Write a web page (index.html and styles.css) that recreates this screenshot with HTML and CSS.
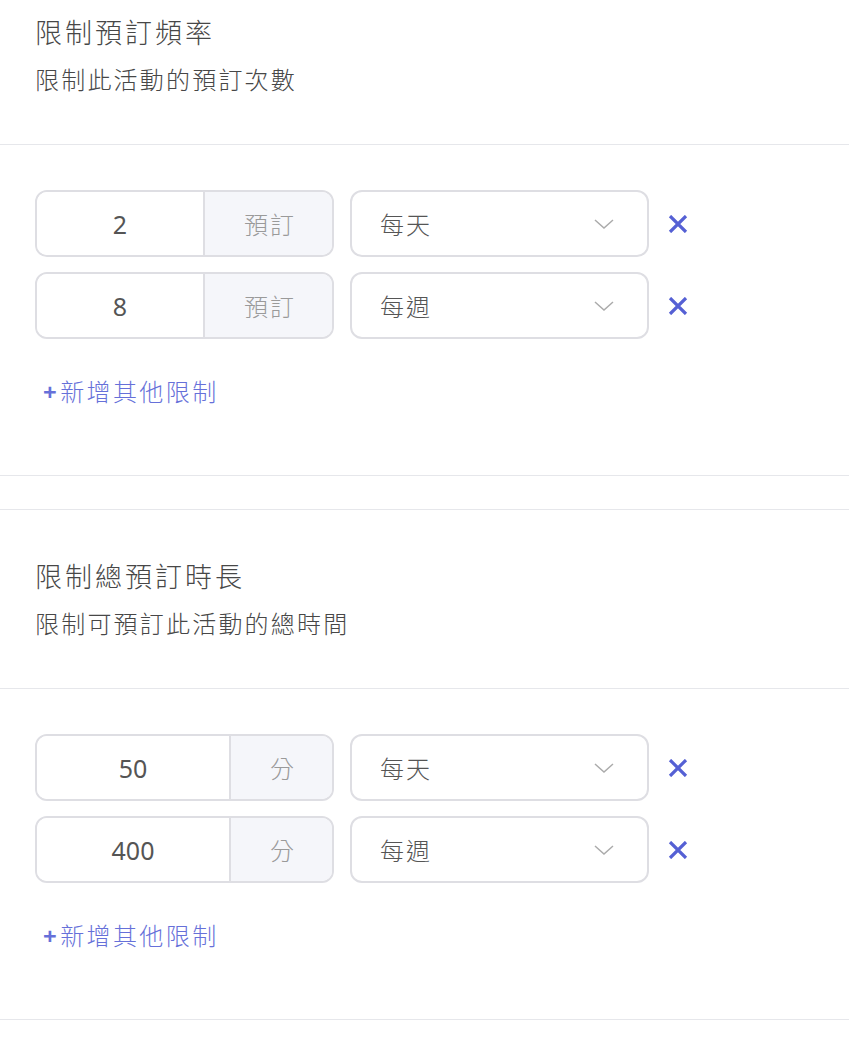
FILE: index.html
```html
<!DOCTYPE html>
<html lang="zh-Hant">
<head>
  <meta charset="UTF-8" />
  <title>預訂限制</title>
  <link rel="stylesheet" href="styles.css">
</head>
<body>
  <div class="page">
    <section class="limit">
      <div class="limit-head">
        <h3>限制預訂頻率</h3>
        <p>限制此活動的預訂次數</p>
      </div>
      <div class="limit-body">
        <div class="rule">
          <div class="qty"><input type="text" value="2"><span class="unit">預訂</span></div>
          <div class="period"><span>每天</span><svg viewBox="0 0 20 10" width="20" height="10"><path d="M1 1l9 8 9-8" /></svg></div>
          <button class="remove"><svg viewBox="0 0 20 18" width="20" height="18"><path d="M2 1l16 16M18 1L2 17" /></svg></button>
        </div>
        <div class="rule">
          <div class="qty"><input type="text" value="8"><span class="unit">預訂</span></div>
          <div class="period"><span>每週</span><svg viewBox="0 0 20 10" width="20" height="10"><path d="M1 1l9 8 9-8" /></svg></div>
          <button class="remove"><svg viewBox="0 0 20 18" width="20" height="18"><path d="M2 1l16 16M18 1L2 17" /></svg></button>
        </div>
        <a class="add" href="#"><b>+</b>新增其他限制</a>
      </div>
    </section>

    <section class="limit">
      <div class="limit-head">
        <h3>限制總預訂時長</h3>
        <p>限制可預訂此活動的總時間</p>
      </div>
      <div class="limit-body">
        <div class="rule">
          <div class="qty"><input type="text" value="50"><span class="unit">分</span></div>
          <div class="period"><span>每天</span><svg viewBox="0 0 20 10" width="20" height="10"><path d="M1 1l9 8 9-8" /></svg></div>
          <button class="remove"><svg viewBox="0 0 20 18" width="20" height="18"><path d="M2 1l16 16M18 1L2 17" /></svg></button>
        </div>
        <div class="rule">
          <div class="qty"><input type="text" value="400"><span class="unit">分</span></div>
          <div class="period"><span>每週</span><svg viewBox="0 0 20 10" width="20" height="10"><path d="M1 1l9 8 9-8" /></svg></div>
          <button class="remove"><svg viewBox="0 0 20 18" width="20" height="18"><path d="M2 1l16 16M18 1L2 17" /></svg></button>
        </div>
        <a class="add" href="#"><b>+</b>新增其他限制</a>
      </div>
    </section>
  </div>
</body>
</html>
```

FILE: styles.css
```css
body {
  margin: 0;
  background: #fff;
  color: #454545;
  font-family: "Noto Sans", "Noto Sans CJK TC", sans-serif;
  font-weight: 300;
  overflow: hidden;
}
.page { margin-top: -35px; }

.limit {
  border-top: 1px solid #e6e7eb;
  border-bottom: 1px solid #e6e7eb;
  margin-bottom: 33px;
}
.limit-head {
  padding: 49px 35px 46px;
  border-bottom: 1px solid #e6e7eb;
}
.limit-head h3 {
  margin: 0;
  font-size: 27px;
  font-weight: 300;
  line-height: 36px;
  letter-spacing: 3px;
  color: #474747;
}
.limit-head p {
  margin: 11px 0 0;
  font-size: 24px;
  line-height: 36px;
  letter-spacing: 2.2px;
  color: #474747;
}

.limit-body {
  padding: 45px 35px 65px;
  display: flex;
  flex-direction: column;
  align-items: flex-start;
}
.rule {
  display: flex;
  align-items: center;
  gap: 16px;
  margin-bottom: 15px;
}
.qty {
  display: flex;
  width: 299px;
  height: 67px;
  box-sizing: border-box;
  border: 2px solid #dedee3;
  border-radius: 12px;
  overflow: hidden;
}
.qty input {
  flex: 1;
  min-width: 0;
  border: none;
  outline: none;
  text-align: center;
  font-family: "Noto Sans", sans-serif;
  font-weight: 400;
  font-size: 25px;
  color: #555;
  background: #fff;
}
.unit {
  display: flex;
  align-items: center;
  padding: 0 36px 0 39px;
  background: #f5f6fa;
  border-left: 2px solid #dedee3;
  font-size: 24px;
  letter-spacing: 2px;
  color: #9a9a9a;
}
.period {
  display: flex;
  align-items: center;
  justify-content: space-between;
  width: 299px;
  height: 67px;
  box-sizing: border-box;
  padding: 0 33px 0 28px;
  border: 2px solid #dedee3;
  border-radius: 12px;
  font-size: 24px;
  letter-spacing: 2px;
  color: #555;
}
.period svg { fill: none; stroke: #ababab; stroke-width: 1.5; }
.remove {
  margin-left: 3px;
  padding: 0;
  border: none;
  background: none;
  cursor: pointer;
  display: flex;
}
.remove svg { stroke: #5560d4; stroke-width: 3.2; }
.add {
  margin: 20px 0 0 8px;
  font-size: 24px;
  line-height: 36px;
  letter-spacing: 2.4px;
  color: #6670d9;
  text-decoration: none;
}
.add b { font-weight: 700; margin-right: 1px; }
```
